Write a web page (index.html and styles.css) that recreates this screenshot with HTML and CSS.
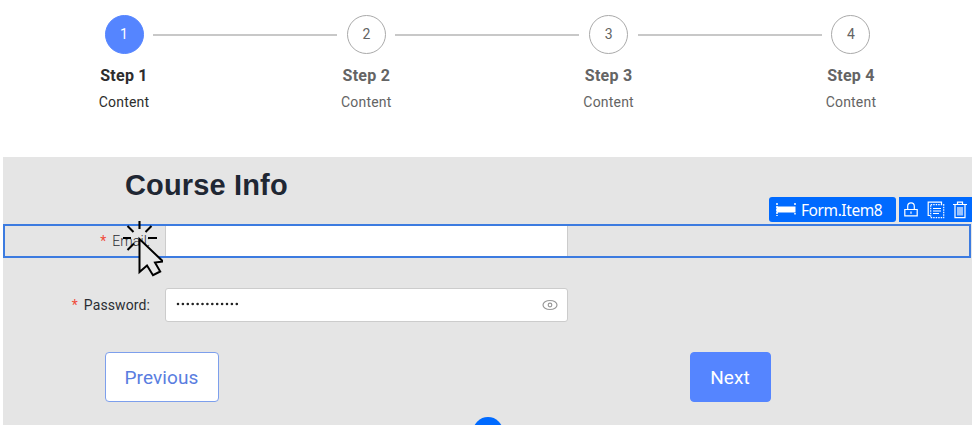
FILE: index.html
```
<!DOCTYPE html>
<html lang="en">
<head>
<meta charset="utf-8">
<title>Course Info</title>
<link rel="stylesheet" href="styles.css">
</head>
<body>
<ol class="steps">
  <li class="step active"><span class="num">1</span><strong>Step 1</strong><span class="desc">Content</span></li>
  <li class="line"></li>
  <li class="step"><span class="num">2</span><strong>Step 2</strong><span class="desc">Content</span></li>
  <li class="line"></li>
  <li class="step"><span class="num">3</span><strong>Step 3</strong><span class="desc">Content</span></li>
  <li class="line"></li>
  <li class="step"><span class="num">4</span><strong>Step 4</strong><span class="desc">Content</span></li>
</ol>
<main class="panel">
  <h1>Course Info</h1>
  <div class="row selected">
    <div class="label email"><i>*</i><span>Email:</span></div>
    <div class="field cut"></div>
    <div class="toolbar">
      <div class="tag">
        <svg width="20" height="13" viewBox="0 0 20 13"><path d="M1 0v13M19 0v3M19 10v1.500" stroke="#fff" stroke-width="1.5" stroke-dasharray="2 1"/><path d="M.5 3.500h19v6H.5z" fill="#fff"/></svg>
        <span>Form.Item8</span>
      </div>
      <div class="tools">
        <svg width="14" height="16" viewBox="0 0 14 16" fill="none" stroke="#fff" stroke-width="1.2"><path d="M.8 7.500h12.400v6.300H.8zM3.700 7.500V4.200a3.300 3.300 0 0 1 6.600 0v3.300M7 9.500v2.300"/></svg>
        <svg width="18" height="18" viewBox="0 0 18 18" fill="none" stroke="#fff"><path d="M3 14.500H1.200V1.200h13.300V3" stroke-width="1.200"/><path d="M3.700 3.700h13v13h-13z" stroke-width="1.200" stroke-dasharray="1.500 1"/><path d="M6 7.500h8M6 10h8M6 12.500h6" stroke-width="1.200"/></svg>
        <svg width="14" height="18" viewBox="0 0 14 18" fill="none" stroke="#fff" stroke-width="1.200"><path d="M0 3.500h14M4.500 3.500V1.200h5v2.300M2 3.500V16.600h10V3.500M5 6v8.500M7 6v8.500M9 6v8.500"/></svg>
      </div>
    </div>
    <svg class="cursor" width="42" height="58" viewBox="0 0 42 58" fill="none" stroke="#000" stroke-width="2.100"><path d="M18.500 0v8M6.500 5l6 6M30.500 5l-6 6M2 17h8M27 17h9M6.500 29l6.500-6.500"/><path d="M18.500 18v33l7.500-6.500 6 9.700 7.200-3.700-5.200-9 8-1z" fill="#e9e9e9" stroke-width="2"/></svg>
  </div>
  <div class="row password">
    <div class="label"><i>*</i><span>Password:</span></div>
    <div class="field">
      <svg class="dots" width="64" height="4" viewBox="0 0 64 4"><path d="M2 2h60" stroke="#222" stroke-width="2.600" stroke-linecap="round" stroke-dasharray="0 4.900"/></svg>
      <svg width="16" height="12" viewBox="0 0 16 12" fill="none" stroke="#999" stroke-width="1.200"><ellipse cx="8" cy="6" rx="7" ry="4.500"/><circle cx="8" cy="6" r="1.800"/></svg>
    </div>
  </div>
  <div class="actions">
    <button class="prev">Previous</button>
    <button class="next">Next</button>
  </div>
  <span class="handle"></span>
</main>
</body>
</html>
```
FILE: styles.css
```
* { box-sizing: border-box; }
body { margin: 0; height: 425px; overflow: hidden; background: #fff; font-family: Roboto, sans-serif; color: #2b2d33; }
svg { display: block; flex: none; }
.steps { display: flex; list-style: none; margin: 0; padding: 15px 0 0 75px; height: 157px; }
.step { width: 98px; flex: none; display: flex; flex-direction: column; align-items: center; color: #646464; }
.num { width: 39px; height: 39px; border: 1px solid #aaa; border-radius: 50%; display: grid; place-items: center; font-size: 14px; padding-bottom: 2px; }
.step strong { margin-top: 12px; font-size: 16px; line-height: 20px; font-weight: 700; letter-spacing: .25px; }
.desc { margin-top: 8px; font-size: 14px; line-height: 16px; letter-spacing: .2px; }
.active { color: #2d2d2d; }
.active .num { background: #5585ff; border-color: #5585ff; color: #fff; }
.line { width: 184px; height: 2px; margin: 18.500px -19.700px 0 -20px; background: #c8c8c8; flex: none; }
.panel { position: relative; overflow: hidden; width: 969px; height: 268px; margin-left: 3px; background: #e5e5e5; }
h1 { margin: 0; height: 67px; padding: 12px 0 0 122px; font: bold 29px/32px "Liberation Sans", sans-serif; color: #1f2733; letter-spacing: .15px; }
.row { display: flex; align-items: center; height: 34px; position: relative; }
.selected { border: 2px solid #3c7be0; width: 968px; }
.label { width: 147px; flex: none; display: flex; justify-content: flex-end; font-size: 14px; line-height: 18px; letter-spacing: .1px; }
.label i { color: #f04b3a; font-style: normal; margin-right: 6px; }
.field { margin-left: 15px; width: 403px; height: 34px; background: #fff; border: 1px solid #ccc; border-radius: 3px; display: flex; align-items: center; justify-content: space-between; padding: 0 9px 0 10px; }
.email { width: 145px; }
.email span { font-weight: 300; }
.cut { height: 30px; border-width: 0 1px; border-radius: 0; }
.dots { margin-top: -3px; }
.toolbar { position: absolute; right: -3px; top: -29px; display: flex; gap: 3px; }
.tag { width: 127px; height: 25px; border-radius: 3px; background: #006aff; color: #fff; display: flex; align-items: center; gap: 5px; padding-left: 7px; font: 15.500px "Noto Sans", sans-serif; letter-spacing: -.42px; }
.tools { width: 73px; height: 25px; background: #006aff; display: flex; align-items: center; justify-content: space-between; padding: 0 5px; }
.cursor { position: absolute; left: 116px; top: -5px; }
.password { margin-top: 30px; }
.password .label { line-height: 16px; margin-top: -1px; }
.actions { display: flex; justify-content: space-between; width: 666px; margin: 30px 0 0 101.500px; }
button { height: 50px; border: 1px solid #7d9fec; border-radius: 4px; background: #fff; color: #597de0; font: 19px Roboto, sans-serif; letter-spacing: .1px; padding: 0; }
.prev { width: 114px; }
.next { width: 81px; background: #5585ff; border-color: #5585ff; color: #fff; }
.handle { position: absolute; left: 470px; top: 260px; width: 30px; height: 30px; border-radius: 50%; background: #006aff; }
```
